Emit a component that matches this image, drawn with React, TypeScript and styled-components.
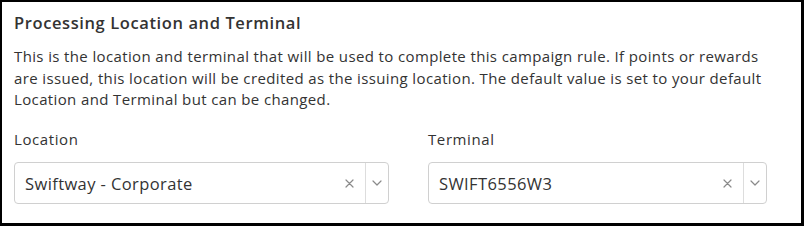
import React from "react";
import styled, { createGlobalStyle } from "styled-components";

const GlobalStyle = createGlobalStyle`
  html, body {
    margin: 0;
    padding: 0;
    background: #ffffff;
  }
  body {
    font-family: "Open Sans", "Noto Sans", sans-serif;
    color: #333333;
  }
`;

interface FieldProps {
  label: string;
  value: string;
  width: number;
}

const ClearIcon = () => (
  <svg width="9" height="9" viewBox="0 0 9 9" fill="none">
    <path d="M1 1L8 8M8 1L1 8" stroke="#8a8a8a" strokeWidth="1.2" strokeLinecap="round" />
  </svg>
);

const ChevronIcon = () => (
  <svg width="10" height="6" viewBox="0 0 10 6" fill="none">
    <path d="M1 1L5 5L9 1" stroke="#8a8a8a" strokeWidth="1.2" strokeLinecap="round" strokeLinejoin="round" />
  </svg>
);

const Field: React.FC<FieldProps> = (props) => {
  return (
    <FieldWrapper style={{ width: props.width }}>
      <Label>{props.label}</Label>
      <SelectBox>
        <SelectValue>{props.value}</SelectValue>
        <ClearButton>
          <ClearIcon />
        </ClearButton>
        <DropButton>
          <ChevronIcon />
        </DropButton>
      </SelectBox>
    </FieldWrapper>
  );
};

const App: React.FC = () => {
  return (
    <>
      <GlobalStyle />
      <Panel>
        <Title>Processing Location and Terminal</Title>
        <Description>
          This is the location and terminal that will be used to complete this campaign rule. If points or rewards
          <br />
          are issued, this location will be credited as the issuing location. The default value is set to your default
          <br />
          Location and Terminal but can be changed.
        </Description>
        <FieldsRow>
          <Field label="Location" value="Swiftway - Corporate" width={375} />
          <Field label="Terminal" value="SWIFT6556W3" width={339} />
        </FieldsRow>
      </Panel>
    </>
  );
};

export default App;

const Panel = styled.div`
  box-sizing: border-box;
  width: 804px;
  height: 226px;
  border-style: solid;
  border-color: #000000;
  border-width: 2px 3px 3px 2px;
  padding: 10px 12px 0 12px;
  display: flex;
  flex-direction: column;
`;

const Title = styled.div`
  font-size: 16.5px;
  font-weight: 600;
  line-height: 22px;
  letter-spacing: 0.6px;
  color: #333333;
`;

const Description = styled.p`
  margin: 12px 0 0 0;
  font-size: 15px;
  line-height: 21.5px;
  letter-spacing: 0.37px;
  color: #333333;
  white-space: nowrap;
`;

const FieldsRow = styled.div`
  display: flex;
  gap: 39px;
  margin-top: 18px;
`;

const FieldWrapper = styled.div`
  display: flex;
  flex-direction: column;
  gap: 12px;
`;

const Label = styled.div`
  font-size: 15px;
  line-height: 21.5px;
  letter-spacing: 0.6px;
  color: #333333;
`;

const SelectBox = styled.div`
  box-sizing: border-box;
  height: 42px;
  border: 1px solid #d0d0d0;
  border-radius: 4px;
  display: flex;
  align-items: stretch;
  background: #ffffff;
`;

const SelectValue = styled.div`
  flex: 1;
  display: flex;
  align-items: center;
  padding-left: 10px;
  font-size: 16.5px;
  letter-spacing: 0.4px;
  color: #333333;
  white-space: nowrap;
  overflow: hidden;
`;

const ClearButton = styled.div`
  width: 32px;
  display: flex;
  align-items: center;
  justify-content: center;
`;

const DropButton = styled.div`
  width: 22px;
  border-left: 1px solid #dddddd;
  display: flex;
  align-items: center;
  justify-content: center;
`;
